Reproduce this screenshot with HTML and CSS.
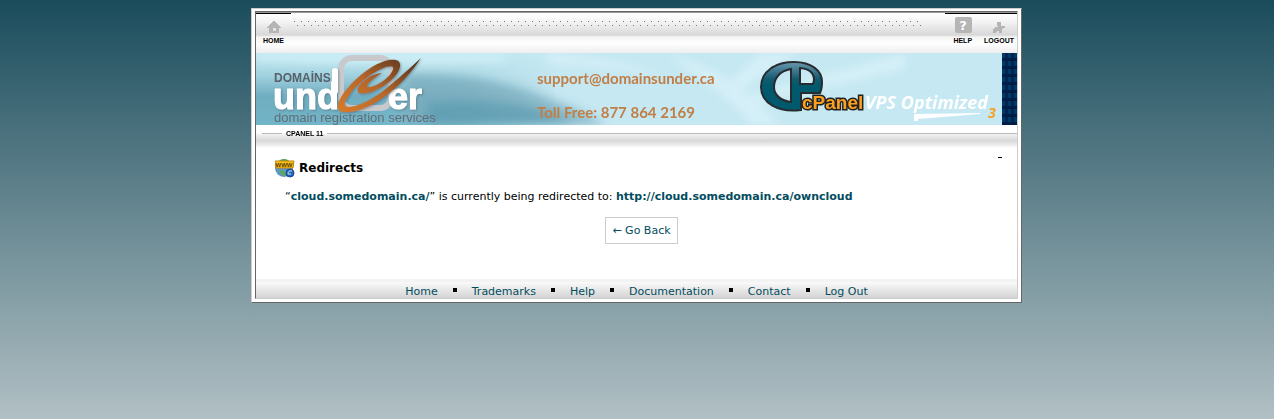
FILE: index.html
```html
<!doctype html>
<html lang="en">
<head>
    <meta charset="UTF-8">
    <title>Redirects</title>
    <link rel="stylesheet" href="styles.css">
</head>
<body>
<div class="frame">
<div class="page">
    <div class="topbar">
        <a class="tool home" href="#">
            <svg width="14" height="18" viewBox="0 0 14 18" shape-rendering="crispEdges"><path fill="#b5b5b5" fill-rule="evenodd" d="M6 5h2v1h1v1h1v1h1v1h1v1h1v1h1v1h-2v5H2v-5H0v-1h1v-1h1V9h1V8h1V7h1V6h1zM6 12v3h3v-3z"/></svg>
            HOME
        </a>
        <div class="dots"></div>
        <div class="tools">
            <a class="tool" href="#">
                <svg width="18" height="18" viewBox="0 0 18 18"><rect x="1" y="1" width="17" height="16" rx="2" fill="#b5b5b5"/><text class="mark" x="9" y="14" text-anchor="middle">?</text></svg>
                HELP
            </a>
            <a class="tool" href="#">
                <svg width="14" height="18" viewBox="0 0 14 18" shape-rendering="crispEdges"><path fill="#b5b5b5" d="M5 6h4v4h4v2h-2v1h-1v4H7v-2H5v1H4v1H1v-4h1v-1h1v-1h3v-1H5z"/></svg>
                LOGOUT
            </a>
        </div>
    </div>

    <div class="banner">
        <svg class="art" viewBox="0 0 746 72" preserveAspectRatio="xMinYMin slice">
            <defs>
                <linearGradient id="sky" x1="0" y1="0" x2="0" y2="1">
                    <stop offset="0" stop-color="#c3e8f2"/>
                    <stop offset=".3" stop-color="#a3d3e0"/>
                    <stop offset=".6" stop-color="#70adc0"/>
                    <stop offset="1" stop-color="#72b5c8"/>
                </linearGradient>
                <linearGradient id="fade">
                    <stop offset="0" stop-color="#c5e8f2" stop-opacity="0"/>
                    <stop offset=".5" stop-color="#c5e8f2" stop-opacity=".25"/>
                    <stop offset="1" stop-color="#c5e8f2"/>
                </linearGradient>
                <linearGradient id="copper" x1="0" y1="1" x2="1" y2="0">
                    <stop offset="0" stop-color="#d67b2c"/>
                    <stop offset=".45" stop-color="#b8682c"/>
                    <stop offset="1" stop-color="#4b2e1b"/>
                </linearGradient>
                <linearGradient id="teal" x1="0" y1="0" x2="0" y2="1">
                    <stop offset="0" stop-color="#6b98ad"/>
                    <stop offset=".35" stop-color="#145a70"/>
                    <stop offset=".5" stop-color="#00596d"/>
                </linearGradient>
                <filter id="soft" x="-20%" y="-50%" width="140%" height="200%"><feGaussianBlur stdDeviation="5"/></filter>
                <filter id="shade" x="-10%" y="-10%" width="130%" height="130%"><feDropShadow dx="1" dy="1" stdDeviation="1" flood-color="#456" flood-opacity=".5"/></filter>
            </defs>
            <rect width="746" height="72" fill="#c5e8f2"/>
            <rect width="300" height="72" fill="url(#sky)"/>
            <rect x="120" width="181" height="72" fill="url(#fade)"/>
            <g filter="url(#soft)">
                <path d="M150 22c60-4 120 12 170 34l30 16H150z" fill="#78aabb" opacity=".7"/>
                <path d="M170 50q80-8 130 12l20 10H170z" fill="#5598ae" opacity=".6"/>
                <path d="M0 0h250v9Q120 14 0 8z" fill="#cdeef6"/>
            </g>
            <g fill="#e0f4fa" opacity=".6" filter="url(#soft)">
                <path d="M290 0q70 4 130 26-60-12-130-16zM410 0q40 10 64 28l30-28h40l-58 36 40 36h-30l-30-30z"/>
                <path d="M480 45l170-45v16L484 54z"/>
            </g>

            <rect x="85" y="5" width="50" height="50" rx="11" fill="none" stroke="#c7c9cd" stroke-width="6"/>
            <text class="name" x="18" y="29">DOMAİNS</text>
            <g class="under" filter="url(#shade)">
                <text x="17" y="56">und</text>
                <path d="M79 18v20" fill="none" stroke="#fff" stroke-width="6" stroke-linecap="round"/>
                <text x="132" y="56">er</text>
            </g>
            <path filter="url(#shade)" fill="url(#copper)" fill-rule="evenodd" d="M165 5C150 28 128 48 106 56C92 61 79 61 82 51C86 37 112 11 133 7C147 5 146 14 140 22C131 34 110 43 103 40C97 35 112 21 126 20C118 25 111 30 111 34C122 35 139 20 137 14C132 9 99 28 89 49C85 60 111 51 127 38C142 26 154 15 165 5z"/>
            <text class="tagline" x="18" y="69">domain registration services</text>

            <text class="contact" x="281" y="31">support@domainsunder.ca</text>
            <text class="contact" x="281" y="65">Toll Free: 877 864 2169</text>

            <path fill="url(#teal)" stroke="#272c31" stroke-width="2" fill-rule="evenodd" d="M545 57C522 60 505 50 505 34C505 18 520 9 538 9C556 9 566 18 566 29C566 35 565 38 564 40H545zM535 16C523 18 518 26 518 34C518 42 525 48 535 49zM544 15V31H557C560 23 556 16 544 15z"/>
            <text class="cpanel" x="546" y="56">cPanel</text>
            <text class="vps" x="609" y="56">VPS Optimized</text>
            <path fill="#fff" d="M658 61l66-1v1l-62 5v2h-4z"/>
            <text class="three" x="732" y="65">3</text>
        </svg>
        <div class="code" aria-hidden="true"></div>
    </div>

    <div class="strip"><span class="product">CPANEL 11</span></div>

    <div class="content">
        <div class="dash"></div>
        <h1>
            <svg width="20" height="20" viewBox="0 0 20 20"><circle cx="9" cy="10" r="9" fill="#5c96c8"/><path d="M3 4Q9-2 15 4l-6 3zM4 12l5 1 2 5-4-1z" fill="#5cab45"/><path d="M0 3h19l-1 7H1z" fill="#f6c21c" stroke="#c48308"/><text class="www" x="9" y="9" text-anchor="middle">WWW</text><circle cx="15" cy="15" r="4" fill="#2466bb" stroke="#174a91"/><path d="M17 13q-4-1-4 3h3" fill="none" stroke="#cfe2f7"/></svg>
            Redirects
        </h1>
        <p>“<b>cloud.somedomain.ca/</b>” is currently being redirected to: <a class="target" href="#">http://cloud.somedomain.ca/owncloud</a></p>
        <div class="back"><a href="#">← Go Back</a></div>
    </div>

    <ul class="footer">
        <li><a href="#">Home</a></li>
        <li><a href="#">Trademarks</a></li>
        <li><a href="#">Help</a></li>
        <li><a href="#">Documentation</a></li>
        <li><a href="#">Contact</a></li>
        <li><a href="#">Log Out</a></li>
    </ul>
</div>
</div>
</body>
</html>
```

FILE: styles.css
```css
*{
    box-sizing: border-box;
    margin: 0;
    padding: 0;
}
html{
    min-height: 100%;
    background: linear-gradient(#1a4c5c, #b1c0c4);
}
body{
    padding: 8px 1px 0 0;
    font: 11px/14px Verdana, "DejaVu Sans", sans-serif;
    color: #000;
}
a{
    color: #024c60;
    text-decoration: none;
}
svg{
    display: block;
}
.frame{
    max-width: 771px;
    margin: 0 auto;
    padding: 2px 3px 3px;
    background: #fff;
    border: 1px solid #ccc;
    border-right-color: #666;
    border-bottom-color: #666;
}
.page{
    border: 1px solid #666;
    border-right-color: #ccc;
    border-bottom-color: #ccc;
}

/* top bar */
.topbar{
    display: flex;
    height: 41px;
    border-top: 1px solid #999;
    background: linear-gradient(#fff 0, #f5f5f5 20%, #d8d8d8 55%, #f4f4f4 60%, #fff 75%, #eee);
}
.tool{
    display: flex;
    flex-direction: column;
    align-items: center;
    gap: 3px;
    padding-top: 2px;
    font: bold 7px/8px "Liberation Sans", Arial, sans-serif;
    color: #000;
}
.home{
    width: 35px;
    border-top: 1px solid #000;
}
.dots{
    flex: 1;
    height: 5px;
    margin: 8px 24px 0 0;
    background:
        conic-gradient(from 90deg at 6px 4px, #777 90deg, transparent 0) 0 0 / 7px 5px,
        conic-gradient(from 270deg at 1px 1px, #777 90deg, transparent 0) 3px 0 / 7px 5px;
}
.tools{
    display: flex;
    gap: 12px;
    padding: 0 3px 0 8px;
    border-top: 1px solid #000;
}
.mark{
    font: bold 13px "DejaVu Sans", sans-serif;
    fill: #fff;
}

/* banner */
.banner{
    display: flex;
    height: 72px;
}
.art{
    flex: 1;
    min-width: 0;
    height: 72px;
}
.code{
    width: 15px;
    background: repeating-linear-gradient(transparent 0 5px, #001d47 5px 8px), repeating-linear-gradient(90deg, #003a66 0 3px, #00234f 3px 6px);
}
.name{
    font: bold 12px "Liberation Sans", Arial, sans-serif;
    fill: #56616a;
}
.under{
    font: bold 36px "Liberation Sans", Arial, sans-serif;
    fill: #fff;
    stroke: #fff;
    stroke-linejoin: round;
}
.tagline{
    font: 13px "Liberation Sans", Arial, sans-serif;
    fill: #626c76;
}
.contact{
    font: bold 15px Lato, sans-serif;
    fill: #c17f48;
}
.cpanel{
    font: bold 19px "Liberation Sans", Arial, sans-serif;
    fill: #faa021;
    stroke: #222;
    stroke-width: 3px;
    paint-order: stroke;
}
.vps{
    font: italic bold 18px "Open Sans", sans-serif;
    fill: #fff;
}
.three{
    font: italic bold 14px "Open Sans", sans-serif;
    fill: #faa021;
}

/* product strip */
.strip{
    display: flex;
    align-items: center;
    gap: 4px;
    height: 24px;
    padding: 0 0 7px 6px;
    background: linear-gradient(#fff 0 8px, #f2f2f2 9px, #d8d8d8 16px, #fff 23px);
}
.strip::before,
.strip::after{
    content: '';
    width: 20px;
    height: 1px;
    background: #bbb;
}
.strip::after{
    flex: 1;
}
.product{
    font: bold 7px/8px "Liberation Sans", Arial, sans-serif;
}

/* content */
.content{
    padding: 8px 15px 35px 19px;
}
.dash{
    width: 4px;
    height: 1px;
    margin-left: auto;
    background: #000;
}
h1{
    display: flex;
    align-items: center;
    gap: 4px;
    font-size: 12px;
    line-height: 18px;
}
.www{
    font: bold 6px "Liberation Sans", Arial, sans-serif;
    fill: #5b3c00;
}
.content p{
    margin: 12px 10px 13px;
}
.content b,
.target{
    font-weight: bold;
    color: #024c60;
}
.back{
    padding-left: 6px;
    text-align: center;
}
.back a{
    display: inline-block;
    padding: 6px 6px 5px;
    border: 1px solid #ccc;
}

/* footer */
.footer{
    display: flex;
    justify-content: center;
    height: 19px;
    padding-top: 6px;
    list-style: none;
    background: linear-gradient(#f3f3f3 0 3px, #fafafa 3px, #d4d4d4);
}
.footer li{
    display: flex;
}
.footer li + li::before{
    content: '';
    width: 4px;
    height: 4px;
    margin: 3px 15px 0;
    background: #000;
}
```
